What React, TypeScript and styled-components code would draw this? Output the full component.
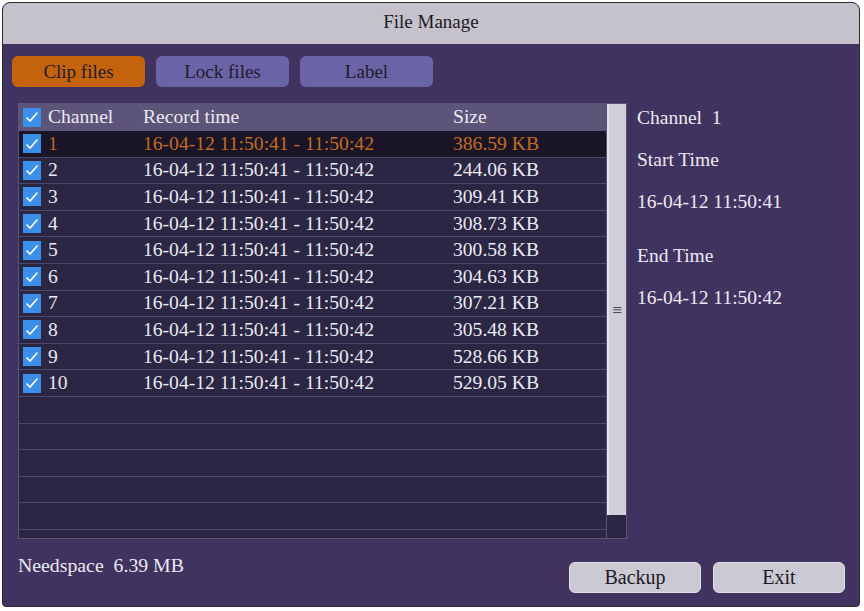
import styled, { createGlobalStyle } from "styled-components";

const GlobalStyle = createGlobalStyle`
  html, body {
    margin: 0;
    padding: 0;
    background: #ffffff;
  }
`;

const serif = `"Liberation Serif", "Times New Roman", serif`;

const Window = styled.div`
  margin: 2px;
  width: 858px;
  height: 605px;
  border: 1px solid #2a2835;
  border-radius: 8px 8px 4px 4px;
  overflow: hidden;
  display: flex;
  flex-direction: column;
  background: #403360;
  box-sizing: border-box;
  font-family: ${serif};
`;

const TitleBar = styled.div`
  height: 41px;
  flex: none;
  background: #c5c2cc;
  color: #1c1a24;
  font-family: ${serif};
  font-size: 19px;
  display: flex;
  align-items: center;
  justify-content: center;
  padding-bottom: 3px;
  box-sizing: border-box;
`;

const Body = styled.div`
  flex: 1;
  display: flex;
  flex-direction: column;
  padding: 12px 14px 0 9px;
`;

const Tabs = styled.div`
  display: flex;
  gap: 11px;
  height: 31px;
`;

const Tab = styled.div<{ $active?: boolean }>`
  width: 133px;
  border-radius: 6px;
  background: ${(p) => (p.$active ? "#c5620c" : "#6a63a6")};
  color: #221c2c;
  font-family: ${serif};
  font-size: 19px;
  display: flex;
  align-items: center;
  justify-content: center;
`;

const Main = styled.div`
  display: grid;
  grid-template-columns: 609px 1fr;
  column-gap: 10px;
  margin-top: 16px;
  padding-left: 6px;
`;

const TableFrame = styled.div`
  height: 436px;
  border: 1px solid #5b5378;
  box-sizing: border-box;
  display: flex;
  background: #2a2644;
`;

const List = styled.div`
  flex: 1;
  overflow: hidden;
  display: flex;
  flex-direction: column;
`;

const Row = styled.div<{ $head?: boolean; $selected?: boolean }>`
  flex: none;
  height: ${(p) => (p.$head ? "27px" : "26.6px")};
  box-sizing: border-box;
  display: grid;
  grid-template-columns: 124px 310px 1fr;
  align-items: center;
  background: ${(p) => (p.$head ? "#5c5479" : p.$selected ? "#191527" : "#2a2644")};
  border-bottom: 1px solid ${(p) => (p.$head ? "#5c5479" : "#4c4769")};
  color: ${(p) => (p.$selected ? "#c56b22" : "#ebe9f1")};
  font-family: ${serif};
  font-size: 19.6px;
  white-space: nowrap;
`;

const ChannelCell = styled.div`
  display: flex;
  align-items: center;
  gap: 7px;
  padding-left: 4px;
`;

const Check = styled.span`
  width: 18px;
  height: 19px;
  background: #3a8fe8;
  display: flex;
  align-items: center;
  justify-content: center;
`;

const Scrollbar = styled.div`
  width: 19px;
  flex: none;
  display: flex;
  flex-direction: column;
  border-left: 1px solid #5b5378;
`;

const Thumb = styled.div`
  flex: 1;
  background: #d0ced9;
  border-left: 2px solid #e2e0ea;
  color: #4d4a5a;
  font-size: 13px;
  display: flex;
  align-items: center;
  justify-content: center;
  font-family: "DejaVu Sans", sans-serif;
`;

const ScrollEnd = styled.div`
  height: 23px;
  background: #2a2644;
`;

const Info = styled.div`
  color: #ebe9f1;
  font-family: ${serif};
  font-size: 19.5px;
  display: flex;
  flex-direction: column;
  padding-top: 4px;
`;

const InfoLine = styled.div<{ $gap: number }>`
  margin-top: ${(p) => p.$gap}px;
  white-space: pre;
`;

const Footer = styled.div`
  display: flex;
  align-items: flex-start;
  justify-content: space-between;
  padding: 15px 0 0 6px;
`;

const Need = styled.div`
  color: #ebe9f1;
  font-family: ${serif};
  font-size: 19.8px;
  white-space: pre;
`;

const Buttons = styled.div`
  display: flex;
  gap: 12px;
  margin-top: 8px;
`;

const Button = styled.div`
  width: 132px;
  height: 31px;
  border-radius: 6px;
  background: #cbc9d3;
  border: 1px solid #e0dee6;
  box-sizing: border-box;
  color: #1c1a24;
  font-family: ${serif};
  font-size: 20px;
  display: flex;
  align-items: center;
  justify-content: center;
`;

const CheckMark = () => (
  <Check>
    <svg width="14" height="12" viewBox="0 0 14 12">
      <path d="M1.5 6.5 L5 10 L12.5 1.5" fill="none" stroke="#ffffff" strokeWidth="1.6" />
    </svg>
  </Check>
);

const sizes = [
  "386.59 KB",
  "244.06 KB",
  "309.41 KB",
  "308.73 KB",
  "300.58 KB",
  "304.63 KB",
  "307.21 KB",
  "305.48 KB",
  "528.66 KB",
  "529.05 KB",
];

const App = () => {
  return (
    <>
      <GlobalStyle />
      <Window>
        <TitleBar>File Manage</TitleBar>
        <Body>
          <Tabs>
            <Tab $active>Clip files</Tab>
            <Tab>Lock files</Tab>
            <Tab>Label</Tab>
          </Tabs>
          <Main>
            <TableFrame>
              <List>
                <Row $head>
                  <ChannelCell>
                    <CheckMark />
                    Channel
                  </ChannelCell>
                  <div>Record time</div>
                  <div>Size</div>
                </Row>
                {sizes.map((s, i) => (
                  <Row key={i} $selected={i === 0}>
                    <ChannelCell>
                      <CheckMark />
                      {i + 1}
                    </ChannelCell>
                    <div>16-04-12 11:50:41 - 11:50:42</div>
                    <div>{s}</div>
                  </Row>
                ))}
                {Array.from({ length: 6 }).map((_, i) => (
                  <Row key={"e" + i} />
                ))}
              </List>
              <Scrollbar>
                <Thumb>≡</Thumb>
                <ScrollEnd />
              </Scrollbar>
            </TableFrame>
            <Info>
              <InfoLine $gap={0}>Channel  1</InfoLine>
              <InfoLine $gap={20}>Start Time</InfoLine>
              <InfoLine $gap={20}>16-04-12 11:50:41</InfoLine>
              <InfoLine $gap={32}>End Time</InfoLine>
              <InfoLine $gap={20}>16-04-12 11:50:42</InfoLine>
            </Info>
          </Main>
          <Footer>
            <Need>Needspace  6.39 MB</Need>
            <Buttons>
              <Button>Backup</Button>
              <Button>Exit</Button>
            </Buttons>
          </Footer>
        </Body>
      </Window>
    </>
  );
};

export default App;
